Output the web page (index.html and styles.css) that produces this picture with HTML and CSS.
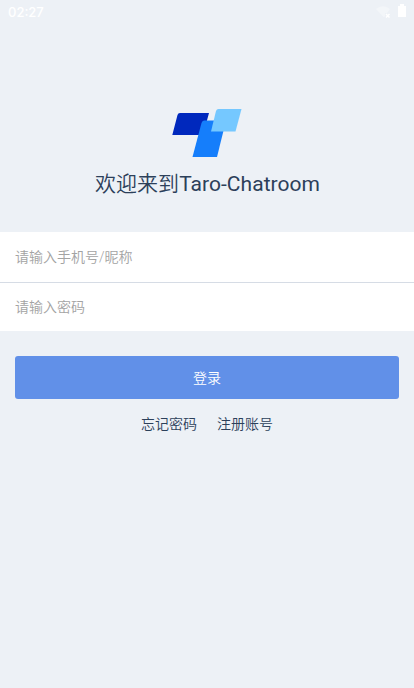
FILE: index.html
```html
<!DOCTYPE html>
<html lang="zh-CN">
<head>
<meta charset="utf-8">
<title>Taro-Chatroom</title>
<link rel="stylesheet" href="styles.css">
</head>
<body>
<header class="status">
  <span class="time">02:27</span>
  <svg class="status-icons" width="32" height="16" viewBox="0 0 32 16">
    <path class="wifi" d="M0 5Q7-.5 14 5L11 9H9v3.500L7.500 13Z"/>
    <path class="cross" d="m10 10 3.500 3.500m0-3.500-3.500 3.500"/>
    <path class="battery" d="M22 2h2V0h4v2h2v11h-8Z"/>
  </svg>
</header>
<main>
  <section class="brand">
    <svg class="logo" width="70" height="48" viewBox="0 0 70 48">
      <path fill="#0028bd" d="M8 4h29l-6 22H.300L5.500 6Q6 4 8 4Z"/>
      <path fill="#157efb" d="M32 11.500h22L45 48H20.500L29.500 14Q30.200 11.500 32 11.500Z"/>
      <path fill="#75c8ff" d="M46.500 0h23L63.500 22.500H39L44 2Q44.600 0 46.500 0Z"/>
    </svg>
    <h1><span class="welcome">欢迎来到</span>Taro-Chatroom</h1>
  </section>
  <form>
    <div class="fields">
      <input class="field" type="text" placeholder="请输入手机号/昵称">
      <input class="field" type="password" placeholder="请输入密码">
    </div>
    <button class="login" type="button">登录</button>
  </form>
  <nav class="links"><a>忘记密码</a><a>注册账号</a></nav>
</main>
</body>
</html>
```
FILE: styles.css
```css
* { box-sizing: border-box; }
body {
  margin: 0;
  min-height: 688px;
  background: #edf1f6;
  color: #2c405a;
  font-family: Roboto, "Noto Sans CJK SC", sans-serif;
  font-weight: 350;
  font-size: 14px;
}
.status {
  display: flex;
  justify-content: space-between;
  height: 24px;
  padding: 4px 6px 0 8px;
  color: #fff;
}
.time {
  font-family: Inter, sans-serif;
  font-size: 13px;
  font-weight: 500;
  line-height: 17px;
}
.wifi { fill: #f3f6f9; }
.cross { stroke: #fff; stroke-width: 1.5; fill: none; }
.battery { fill: #fff; }
.brand {
  display: flex;
  flex-direction: column;
  align-items: center;
  height: 208px;
  padding-top: 85px;
}
.logo { display: block; }
h1 {
  margin: 11px 0 0;
  padding-left: 1px;
  font-size: 21px;
  font-weight: 400;
  letter-spacing: .04px;
  line-height: 32px;
}
.welcome { font-weight: 350; }
.fields { background: #fff; }
.field {
  display: block;
  width: 100%;
  height: 48px;
  padding: 0 15px;
  border: 0;
  background: transparent;
  font: inherit;
}
.field:first-child { height: 51px; border-bottom: 1px solid #d6dce5; }
.field::placeholder { color: #a3a3a3; opacity: 1; }
.login {
  display: block;
  width: calc(100% - 30px);
  height: 43px;
  margin: 25px 15px 0;
  padding: 0 0 2px;
  border: 0;
  border-radius: 3px;
  background: #6190e8;
  color: #fff;
  font: inherit;
}
.links {
  display: flex;
  justify-content: center;
  gap: 20px;
  margin-top: 15px;
  line-height: 21px;
}
```
